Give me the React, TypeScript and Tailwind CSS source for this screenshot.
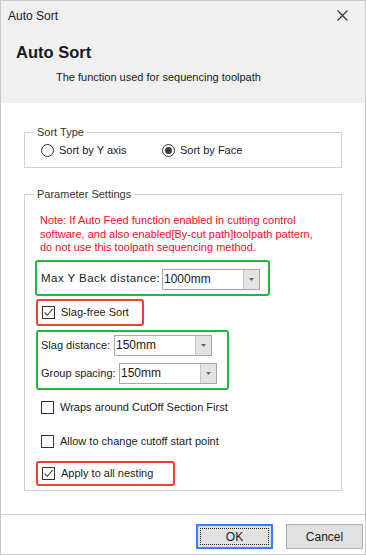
import { useState } from 'react';

const font = { fontFamily: '"Liberation Sans", Arial, sans-serif' };

function Radio({ checked, label, onClick, w }: { checked: boolean; label: string; onClick: () => void; w: string }) {
  return (
    <button onClick={onClick} className={`flex items-center gap-[5px] h-[22px] whitespace-nowrap ${w}`}>
      <span className="w-[13px] h-[13px] shrink-0 rounded-full border border-[#333] bg-white flex items-center justify-center">
        {checked && <span className="w-[7px] h-[7px] rounded-full bg-[#3c3c3c]" />}
      </span>
      <span>{label}</span>
    </button>
  );
}

function Check({ checked, label, onClick }: { checked: boolean; label: string; onClick: () => void }) {
  return (
    <button onClick={onClick} className="flex items-center gap-[6px] whitespace-nowrap">
      <span className="w-[13px] h-[13px] shrink-0 border border-[#333] bg-white flex items-center justify-center">
        {checked && (
          <svg width="11" height="11" viewBox="0 0 11 11">
            <path d="M1.5 5.5 L4.2 8.3 L9.6 2.2" fill="none" stroke="#444" strokeWidth="1.1" />
          </svg>
        )}
      </span>
      <span>{label}</span>
    </button>
  );
}

function Combo({ value, w }: { value: string; w: string }) {
  return (
    <div className={`flex shrink-0 h-[21px] border border-[#a8a8a8] bg-white ${w}`}>
      <div className="flex-1 pl-[1px] flex items-center text-[12px]">{value}</div>
      <div className="w-[16px] bg-[#e3e3e3] border-l border-[#c4c4c4] flex items-center justify-center">
        <svg width="5" height="3" viewBox="0 0 5 3"><path d="M0 0 H5 L2.5 3 Z" fill="#666" /></svg>
      </div>
    </div>
  );
}

export default function App() {
  const [sortType, setSortType] = useState<'y' | 'face'>('face');
  const [slagFree, setSlagFree] = useState(true);
  const [wraps, setWraps] = useState(false);
  const [allowStart, setAllowStart] = useState(false);
  const [applyAll, setApplyAll] = useState(true);

  return (
    <div style={font} className="w-[366px] h-[555px] border border-[#c8c8c8] bg-white flex flex-col text-[11px] text-[#1a1a1a]">
      {/* title bar */}
      <div className="h-[29px] bg-[#f0f0f0] flex items-center justify-between pl-[7px] pr-[17px] text-[12px]">
        <span>Auto Sort</span>
        <svg width="11" height="11" viewBox="0 0 11 11">
          <path d="M0.5 0.5 L10.5 10.5 M10.5 0.5 L0.5 10.5" stroke="#333" strokeWidth="1.1" />
        </svg>
      </div>

      {/* header */}
      <div className="h-[73px] bg-[#f0f0f0] pl-[15px] pt-[12px]">
        <div className="text-[16.5px] font-bold leading-[20px]">Auto Sort</div>
        <div className="pl-[40px] mt-[8px] leading-[14px] text-[11px]">The function used for sequencing toolpath</div>
      </div>

      {/* content */}
      <div className="flex-1 px-[23px]">
        <fieldset className="mt-[22px] border border-[#d2d2d2] pb-[6px]">
          <legend className="ml-[9px] px-[3px] leading-[14px] text-[#333]">Sort Type</legend>
          <div className="flex pl-[16px]">
            <Radio w="w-[121px]" checked={sortType === 'y'} label="Sort by Y axis" onClick={() => setSortType('y')} />
            <Radio w="" checked={sortType === 'face'} label="Sort by Face" onClick={() => setSortType('face')} />
          </div>
        </fieldset>

        <fieldset className="mt-[19px] border border-[#d2d2d2] h-[304px]">
          <legend className="ml-[9px] px-[3px] leading-[14px] text-[#333]">Parameter Settings</legend>
          <div className="pl-[10px] pr-[4px]">
            <p className="pt-[13px] pl-[5px] pr-[20px] text-[#ff0a1e] leading-[13.5px]">
              Note: If Auto Feed function enabled in cutting control software, and also enabled[By-cut path]toolpath pattern, do not use this toolpath sequencing method.
            </p>

            <div className="mt-[5px] w-[235px] h-[36px] border-2 border-[#1fb843] rounded-[3px] flex items-center pl-[4px] pt-[3px]">
              <span className="tracking-[0.45px] text-[11.5px] w-[121px] shrink-0 whitespace-nowrap">Max Y Back distance:</span>
              <Combo value="1000mm" w="w-[98px]" />
            </div>

            <div className="mt-[3px] ml-[1px] w-[108px] h-[27px] border-2 border-[#ee4036] rounded-[3px] flex items-center pl-[4px]">
              <Check checked={slagFree} label="Slag-free Sort" onClick={() => setSlagFree(!slagFree)} />
            </div>

            <div className="mt-[4px] ml-[1px] w-[193px] h-[60px] border-2 border-[#1fb843] rounded-[3px] pl-[3px] pt-[3px] flex flex-col gap-[7px]">
              <div className="flex items-center">
                <span className="w-[73px] shrink-0 whitespace-nowrap">Slag distance:</span>
                <Combo value="150mm" w="w-[98px]" />
              </div>
              <div className="flex items-center">
                <span className="w-[78px] shrink-0 whitespace-nowrap">Group spacing:</span>
                <Combo value="150mm" w="w-[98px]" />
              </div>
            </div>

            <div className="mt-[9px] pl-[6px] h-[18px] flex items-center">
              <Check checked={wraps} label="Wraps around CutOff Section First" onClick={() => setWraps(!wraps)} />
            </div>
            <div className="mt-[16px] pl-[6px] h-[18px] flex items-center">
              <Check checked={allowStart} label="Allow to change cutoff start point" onClick={() => setAllowStart(!allowStart)} />
            </div>

            <div className="mt-[10px] ml-[1px] w-[139px] h-[25px] border-2 border-[#ee4036] rounded-[3px] flex items-center pl-[4px]">
              <Check checked={applyAll} label="Apply to all nesting" onClick={() => setApplyAll(!applyAll)} />
            </div>
          </div>
        </fieldset>
      </div>

      {/* footer */}
      <div className="h-[40px] border-t border-[#d2d2d2] flex justify-end items-start pt-[9px] pr-[2px] gap-[13px] text-[12px]">
        <button className="w-[77px] h-[25px] border-2 border-[#3c7cff] bg-[#e1e1e1] p-[2px]">
          <span className="flex w-full h-full items-center justify-center border border-dotted border-[#222]">OK</span>
        </button>
        <button className="w-[77px] h-[25px] border border-[#adadad] bg-[#e1e1e1] flex items-center justify-center">Cancel</button>
      </div>
    </div>
  );
}
